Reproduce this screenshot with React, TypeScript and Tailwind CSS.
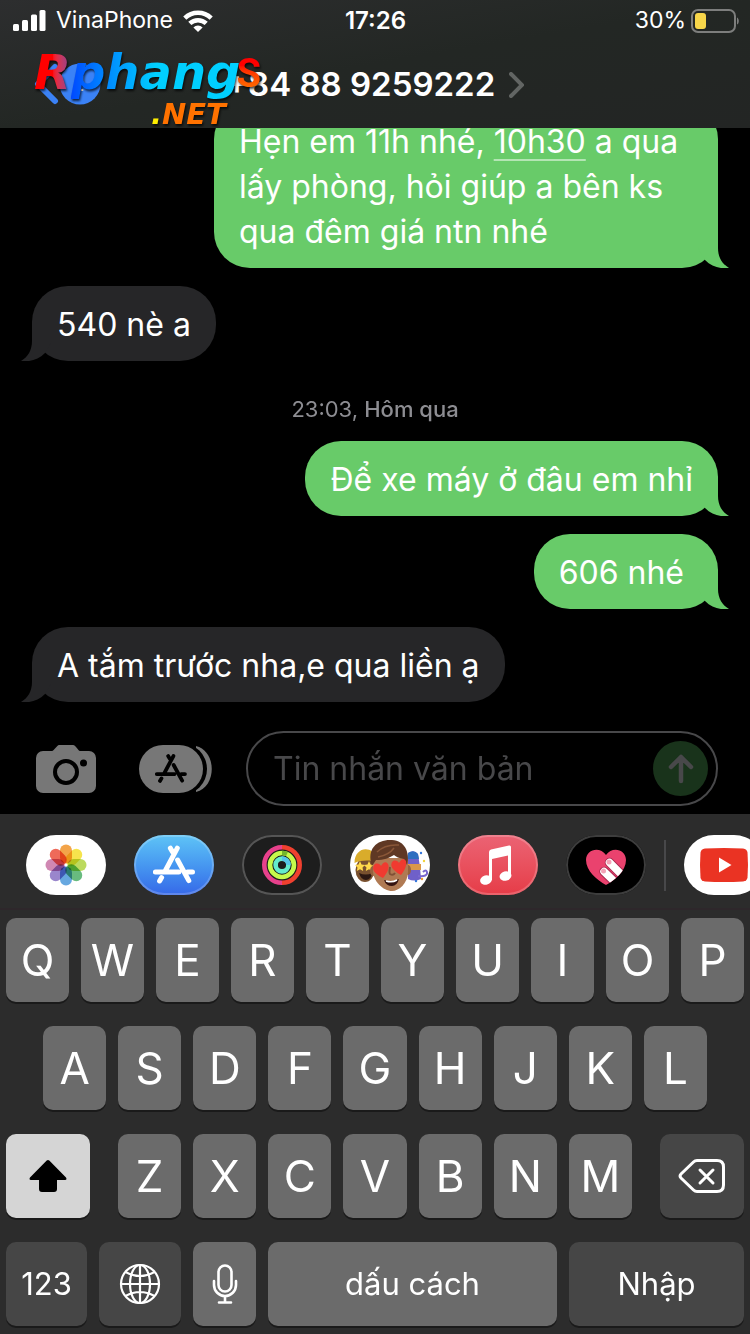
import React, { useState } from 'react';
import { clsx } from 'clsx';

interface Message {
  id: number;
  mine: boolean;
  body: React.ReactNode;
}

const earlier: Message[] = [
  {
    id: 1,
    mine: true,
    body: (
      <>
        Hẹn em 11h nhé,{' '}
        <a href="#calendar" className="underline decoration-white/50 decoration-2 underline-offset-6">10h30</a> a qua
        lấy phòng, hỏi giúp a bên ks qua đêm giá ntn nhé
      </>
    ),
  },
  { id: 2, mine: false, body: '540 nè a' },
];

const yesterday: Message[] = [
  { id: 3, mine: true, body: 'Để xe máy ở đâu em nhỉ' },
  { id: 4, mine: true, body: '606 nhé\u00a0' },
  { id: 5, mine: false, body: 'A tắm trước nha,e qua liền ạ' },
];

const petals = ['#f29a35', '#f5e13a', '#b5d64c', '#58b471', '#569fdd', '#8f79c6', '#cb7bab', '#ec5a48'];

const StatusBar: React.FC = () => (
  <div className="grid grid-cols-3 items-center h-[41px] pl-3 pr-[11px] text-[23px]">
    <div className="flex items-center gap-2.5">
      <svg width="34" height="22" viewBox="0 0 34 22" fill="#fff" aria-hidden="true">
        <rect x="1" y="14" width="6" height="7" rx="1.5" />
        <rect x="10" y="10" width="6" height="11" rx="1.5" />
        <rect x="19" y="4.500" width="6" height="16.500" rx="1.5" />
        <rect x="27.500" y="0" width="6" height="21" rx="1.5" />
      </svg>
      <span>VinaPhone</span>
      <svg width="30" height="22" viewBox="0 0 30 22" fill="none" stroke="#fff" strokeWidth="4.500" aria-hidden="true">
        <path d="M1.800 8.200a19 19 0 0 1 26.400 0" />
        <path d="M6.800 13.400a12 12 0 0 1 16.400 0" />
        <path d="M15 22l-4.600-4.600a6.600 6.600 0 0 1 9.200 0z" fill="#fff" stroke="none" />
      </svg>
    </div>
    <span className="text-center text-2xl font-semibold">17:26</span>
    <div className="flex items-center justify-end gap-1">
      <span>30%</span>
      <svg width="49" height="24" viewBox="0 0 49 24" aria-hidden="true">
        <rect x="2" y="1" width="43" height="22" rx="6" fill="none" stroke="#7d7e7d" strokeWidth="2" />
        <rect x="5" y="4" width="11" height="16" rx="3" fill="#f7d64a" />
        <path d="M47 8.500c2.400 1 2.400 6 0 7z" fill="#7d7e7d" />
      </svg>
    </div>
  </div>
);

const Watermark: React.FC = () => (
  <div className="absolute left-[34px] top-10 font-['DejaVu_Sans',sans-serif] font-bold italic drop-shadow-[1px_2px_1px_rgba(0,0,0,0.7)]">
    <div className="flex items-center leading-[60px]">
      <span className="bg-linear-to-r from-[#ff0000] from-50% to-[#8a3a90] bg-clip-text text-[48px] text-transparent">R</span>
      <span className="bg-linear-to-r from-[#0048ff] to-[#00cfff] to-50% bg-clip-text text-[48px] text-transparent">phang</span>
      <span className="-ml-1 bg-linear-to-b from-[#ff0000] from-40% to-[#ff6a00] to-75% bg-clip-text pt-1 font-['Roboto',sans-serif] text-[40px] not-italic leading-[60px] text-transparent">
        S
      </span>
    </div>
    <div className="-mt-1.5 pl-[117px] text-[29px] leading-8 text-[#ff7200]">
      <span className="text-[#ffee00]">.</span>NET
    </div>
  </div>
);

const Header: React.FC = () => (
  <header className="relative z-10 h-32 bg-linear-to-br from-[#2d2e2f] via-[#232724] to-[#232524] text-white">
    <StatusBar />
    <div className="relative flex h-[87px] items-center justify-center">
      <button aria-label="Quay lại" className="absolute left-[34px] top-[21px]">
        <svg width="68" height="44" viewBox="0 0 68 44" fill="none">
          <path d="M21 5L4 22l17 17" stroke="#3b82f6" strokeWidth="6" strokeLinecap="round" strokeLinejoin="round" />
          <circle cx="46" cy="22" r="20.5" fill="#3b82f6" />
          <path d="M48 14v9M48 27v2" stroke="#fff" strokeWidth="2.5" />
        </svg>
      </button>
      <button className="flex items-center gap-3.5 text-[33px] font-semibold">
        +84 88 9259222
        <svg width="15" height="26" viewBox="0 0 15 26" fill="none" stroke="#626563" strokeWidth="4" strokeLinecap="round" aria-hidden="true">
          <path d="M2 2l11 11L2 24" />
        </svg>
      </button>
    </div>
    <Watermark />
  </header>
);

const Bubble: React.FC<{ message: Message }> = ({ message }) => (
  <div
    className={clsx(
      'relative max-w-[504px] rounded-[36px] px-[25px] pt-4 pb-3.5 text-[32px] leading-[45px] text-white',
      message.mine ? 'self-end bg-[#68cb69]' : 'self-start bg-[#262628]',
    )}
  >
    {message.body}
    <svg
      width="32"
      height="40"
      viewBox="0 0 32 40"
      aria-hidden="true"
      className={clsx('absolute bottom-0', message.mine ? '-right-3 text-[#68cb69]' : '-left-3 -scale-x-100 text-[#262628]')}
    >
      <path d="M20 0v20c0 9 4 16 11 20-9 1-17-1-24-8L0 20z" fill="currentColor" />
    </svg>
  </div>
);

const StoreMark: React.FC = () => (
  <g strokeLinecap="round" fill="none">
    <path d="M43.300 13.200L31.200 36M36.400 13.200l2.200 3.800M43.600 25L54.800 45.600M21.400 37h23.400M53.500 37h5M27.600 42.600l-2 3.400" />
  </g>
);

const Composer: React.FC = () => {
  const [text, setText] = useState('');

  return (
    <form onSubmit={e => e.preventDefault()} className="flex items-center pb-2 pl-9 pr-8 pt-[29px]">
      <button type="button" aria-label="Máy ảnh" className="mr-[43px]">
        <svg width="60" height="48" viewBox="0 0 60 48">
          <path d="M7 6h9c2 0 5-6 7-6h14c3 0 5 6 7 6h9a7 7 0 0 1 7 7v28a7 7 0 0 1-7 7H7a7 7 0 0 1-7-7V13a7 7 0 0 1 7-7z" fill="#777" />
          <circle cx="30" cy="27" r="11" fill="none" stroke="#000" strokeWidth="4" />
          <circle cx="47.500" cy="18" r="3.500" fill="#000" />
        </svg>
      </button>
      <button type="button" aria-label="Ứng dụng" className="mr-[34px]">
        <svg width="73" height="48" viewBox="0 0 73 48">
          <path d="M57 1c21 5 21 41 0 46z" fill="#777" />
          <rect x="-2" y="-2" width="70" height="52" rx="26" fill="#000" />
          <rect x="0" y="0" width="64" height="48" rx="24" fill="#777" />
          <g transform="translate(1.500 1) scale(.76)" stroke="#000" strokeWidth="5">
            <StoreMark />
          </g>
        </svg>
      </button>
      <div className="flex h-[75px] min-w-0 flex-1 items-center rounded-full border-2 border-[#48484a] pl-[25px] pr-2">
        <input
          type="text"
          aria-label="Tin nhắn văn bản"
          placeholder="Tin nhắn văn bản"
          value={text}
          onChange={e => setText(e.target.value)}
          className="min-w-0 flex-1 bg-transparent text-[32px] text-white outline-none placeholder:text-[#48484a]"
        />
        <button type="submit" aria-label="Gửi" className="flex size-[55px] items-center justify-center rounded-full bg-[#19331b]">
          <svg width="26" height="30" viewBox="0 0 26 30" fill="none" stroke="#48484a" strokeWidth="4.500" strokeLinecap="round" strokeLinejoin="round">
            <path d="M13 27V3M3 13L13 3l10 10" />
          </svg>
        </button>
      </div>
    </form>
  );
};

const Memoji: React.FC = () => (
  <svg width="80" height="60" viewBox="0 0 80 60">
    <ellipse cx="15" cy="35" rx="9.500" ry="12" fill="#79502f" />
    <path d="M4.500 28c0-17 19-18 22-4v3c-7-2-15-2-22 1z" fill="#d9ac2b" />
    <path d="M9 38q7 3 13 0-1 7-6 7t-7-7z" fill="#2c1713" />
    <path d="M10 26l1.500 3.500 3.500.5-2.500 2.500.7 3.500-3.200-1.700L6.800 36l.7-3.500L5 30l3.500-.5zM19 26l1.500 3.500 3.500.5-2.500 2.500.7 3.500-3.200-1.700-3.200 1.700.7-3.500L14 30l3.500-.5z" fill="#ffd84a" />
    <path d="M58 18q6-4 10 1l2 13 1 12q-7 3-13 0z" fill="#6f60c9" />
    <path d="M58 18q6-4 10 1l1 5H57z" fill="#2f6fc0" />
    <path d="M57 29h14v6H57z" fill="#d9974a" />
    <path d="M68 41q10 1 9-4-1-3-4 0" fill="none" stroke="#7a68cf" strokeWidth="2" />
    <circle cx="71" cy="18" r="1.200" fill="#3577dc" />
    <circle cx="74" cy="26" r="1.200" fill="#f2d33c" />
    <circle cx="66" cy="46" r="1.200" fill="#3577dc" />
    <circle cx="72" cy="44" r="1.200" fill="#ef9a2e" />
    <ellipse cx="23" cy="36" rx="3" ry="5" fill="#96633f" />
    <ellipse cx="58" cy="35" rx="3" ry="5" fill="#96633f" />
    <path d="M23 23h35v14c0 11-9 19-16 19-9 0-19-10-19-20z" fill="#b07a53" />
    <path d="M22 31C16 13 28 4 42 5c13 1 18 12 15 25l-3-6c-5-1-8-2-10-4-5 3-10 5-18 5z" fill="#5f3824" />
    <path d="M27 17q8-8 22-7M28 22q11-2 16-9" fill="none" stroke="#8a5738" strokeWidth="1.500" />
    <path d="M40 32q-1 6 0 7 3 2 5-1" fill="none" stroke="#805136" strokeWidth="2" />
    <path d="M34 45q8 3 15-1-2 7-7 7-6 0-8-6z" fill="#35130f" />
    <path d="M36 46q6 2 11-1" fill="none" stroke="#fff" strokeWidth="1.500" />
    <path d="M33 43c-10-5-12-10-8-14 3-1 5 0 6 2 2-4 5-5 7-2 2 4-1 9-5 14zM51 40c-9-5-12-10-8-14 3-1 5 0 6 2 2-4 5-5 7-2 1 4-1 9-5 14z" fill="#f03a30" />
  </svg>
);

const apps = [
  {
    name: 'Ảnh',
    style: 'bg-white',
    icon: (
      <svg width="80" height="60" viewBox="-40 -30 80 60">
        {petals.map((color, i) => (
          <rect
            key={color}
            x="-6"
            y="-20.500"
            width="12"
            height="19"
            rx="6"
            fill={color}
            fillOpacity="0.9"
            transform={`rotate(${i * 45})`}
            className="mix-blend-multiply"
          />
        ))}
      </svg>
    ),
  },
  {
    name: 'App Store',
    style: 'bg-linear-to-b from-[#5fc4f6] to-[#3768e8] inset-ring-2 inset-ring-white/20',
    icon: (
      <svg width="80" height="60" viewBox="0 0 80 60" stroke="#fff" strokeWidth="5">
        <StoreMark />
      </svg>
    ),
  },
  {
    name: 'Hoạt động',
    style: 'bg-[#1d1d1d] inset-ring-2 inset-ring-[#555]',
    icon: (
      <svg width="80" height="60" viewBox="-40 -30 80 60" fill="none" strokeWidth="4.600">
        <path d="M0-17.700a17.700 17.700 0 0 0 0 35.400" stroke="#e8418c" />
        <path d="M0-17.700a17.700 17.700 0 0 1 0 35.400" stroke="#f0402f" />
        <circle r="12" stroke="#c6f94b" />
        <path d="M0-12a12 12 0 0 1 5 1" stroke="#75b52c" />
        <circle r="6.400" stroke="#63eccb" />
        <path d="M0-6.400a6.400 6.400 0 0 1 6.400 6.400" stroke="#55c5e8" />
      </svg>
    ),
  },
  { name: 'Memoji', style: 'bg-white', icon: <Memoji /> },
  {
    name: 'Âm nhạc',
    style: 'bg-linear-to-b from-[#eb6374] to-[#e63b47] inset-ring-2 inset-ring-white/20',
    icon: (
      <svg width="80" height="60" viewBox="0 0 80 60" fill="#fff">
        <path d="M31 17q0-2 2-2.500l18-4q2-.4 2 1.500v29h-3V20.500L34 24v21h-3z" />
        <ellipse cx="28" cy="45" rx="6" ry="4.700" transform="rotate(-15 28 45)" />
        <ellipse cx="47.500" cy="41" rx="6" ry="4.700" transform="rotate(-15 47.500 41)" />
      </svg>
    ),
  },
  {
    name: 'Digital Touch',
    style: 'bg-black inset-ring-2 inset-ring-[#3d3d3d]',
    icon: (
      <svg width="80" height="60" viewBox="0 0 80 60">
        <clipPath id="heart">
          <path d="M40 50C31 45 20 36 20 25c0-11 14-14 20-5 6-9 20-6 20 5 0 11-11 20-20 25z" />
        </clipPath>
        <g clipPath="url(#heart)">
          <path d="M0 0h80v60H0z" fill="#ea426e" />
          <path d="M43.500 27.500L60 44M38 36.500L54 52" stroke="#a92950" strokeWidth="9.500" strokeLinecap="round" />
          <path d="M43.500 27.500L60 44M38 36.500L54 52" stroke="#fff" strokeWidth="7.500" strokeLinecap="round" />
          <circle cx="43" cy="27" r="2.500" fill="#f3a4b8" />
          <circle cx="37.500" cy="36" r="2.500" fill="#f3a4b8" />
        </g>
      </svg>
    ),
  },
];

const AppStrip: React.FC = () => (
  <nav className="flex items-center gap-7 overflow-hidden border-b-2 border-[#2e272b] pb-[13px] pl-[26px] pt-[21px]">
    {apps.map(app => (
      <button key={app.name} aria-label={app.name} className={clsx('h-[60px] w-20 shrink-0 overflow-hidden rounded-[30px]', app.style)}>
        {app.icon}
      </button>
    ))}
    <div className="-ml-2.5 flex shrink-0 items-center gap-[18px]">
      <div className="h-[51px] w-0.5 bg-[#48484a]" />
      <button aria-label="YouTube" className="h-[60px] w-20 overflow-hidden rounded-[30px] bg-white">
        <svg width="80" height="60" viewBox="0 0 80 60">
          <path d="M21 13.500q19-1 38 0 4 .5 4.500 4 1 12.500 0 25-.5 3.500-4.500 4-19 1-38 0-4-.5-4.500-4-1-12.500 0-25 .5-3.500 4.500-4z" fill="#ea3323" />
          <path d="M35 22.500L47.500 30 35 37.500z" fill="#fff" />
        </svg>
      </button>
    </div>
  </nav>
);

interface KeyProps {
  children: React.ReactNode;
  label?: string;
  className?: string;
}

const Key: React.FC<KeyProps> = ({ children, label, className = 'flex-1 bg-[#6b6b6b] text-[44px]' }) => (
  <button
    aria-label={label}
    className={clsx('flex h-[84px] min-w-0 items-center justify-center rounded-[10px] text-white shadow-[0_2px_0_#1a1a1a]', className)}
  >
    {children}
  </button>
);

const Letters: React.FC<{ row: string }> = ({ row }) => (
  <>
    {row.split('').map(letter => <Key key={letter}>{letter}</Key>)}
  </>
);

const Keyboard: React.FC = () => (
  <div className="flex flex-col gap-6 px-1.5 py-2">
    <div className="flex gap-3">
      <Letters row="QWERTYUIOP" />
    </div>
    <div className="flex gap-3 px-[37px]">
      <Letters row="ASDFGHJKL" />
    </div>
    <div className="flex gap-7">
      <Key label="Shift" className="w-[84px] bg-[#d5d5d5]">
        <svg width="38" height="34" viewBox="0 0 38 34">
          <path d="M17.700 1.500q1.300-1.200 2.600 0L37 18.500q1.300 2.500-1 2.500h-8v9q0 3-3 3H13q-3 0-3-3v-9H2q-2.300 0-1-2.500z" fill="#000" />
        </svg>
      </Key>
      <div className="flex min-w-0 flex-1 gap-3">
        <Letters row="ZXCVBNM" />
      </div>
      <Key label="Xóa" className="w-[84px] bg-[#464646]">
        <svg width="48" height="36" viewBox="0 0 48 36" fill="none" stroke="#fff" strokeWidth="3" strokeLinecap="round" strokeLinejoin="round">
          <path d="M19 2.500h20q6.500 0 6.500 6.500v18q0 6.500-6.500 6.500H19q-2 0-3.500-1.500L3 20q-2-2 0-4L15.500 4Q17 2.500 19 2.500z" />
          <path d="M22 12l13 13M35 12L22 25" />
        </svg>
      </Key>
    </div>
    <div className="flex gap-3">
      <Key className="w-[81px] bg-[#464646] text-[31px]">123</Key>
      <Key label="Bàn phím tiếp theo" className="w-[82px] bg-[#464646]">
        <svg width="42" height="42" viewBox="0 0 42 42" fill="none" stroke="#fff" strokeWidth="2.200">
          <circle cx="21" cy="21" r="19" />
          <ellipse cx="21" cy="21" rx="10" ry="19" />
          <path d="M21 2v38M2 21h38M6.500 9q14.500 8 29 0M6.500 33q14.500-8 29 0" />
        </svg>
      </Key>
      <Key label="Đọc chính tả" className="w-[63px] bg-[#6b6b6b]">
        <svg width="26" height="42" viewBox="0 0 26 42" fill="none" stroke="#fff" strokeWidth="2.600" strokeLinecap="round">
          <rect x="6.500" y="2.500" width="13" height="26" rx="6.500" />
          <path d="M2 18v4a11 11 0 0 0 22 0v-4M13 33v6.500M7 39.500h12" />
        </svg>
      </Key>
      <Key className="flex-1 bg-[#6b6b6b] text-[31px]">dấu cách</Key>
      <Key className="w-[175px] bg-[#464646] text-[31px]">Nhập</Key>
    </div>
  </div>
);

const App: React.FC = () => (
  <div className="flex min-h-screen flex-col bg-black font-['Inter','Noto_Sans',sans-serif]">
    <Header />
    <main className="-mt-[25px] flex flex-1 flex-col gap-[18px] px-8">
      {earlier.map(m => <Bubble key={m.id} message={m} />)}
      <p className="pt-[18px] pb-0.5 text-center text-[22px] leading-6 text-[#8d8d92]">
        23:03, <span className="font-medium">Hôm qua</span>
      </p>
      {yesterday.map(m => <Bubble key={m.id} message={m} />)}
    </main>
    <Composer />
    <section className="bg-[#2c2c2c]">
      <AppStrip />
      <Keyboard />
    </section>
  </div>
);

export default App;
